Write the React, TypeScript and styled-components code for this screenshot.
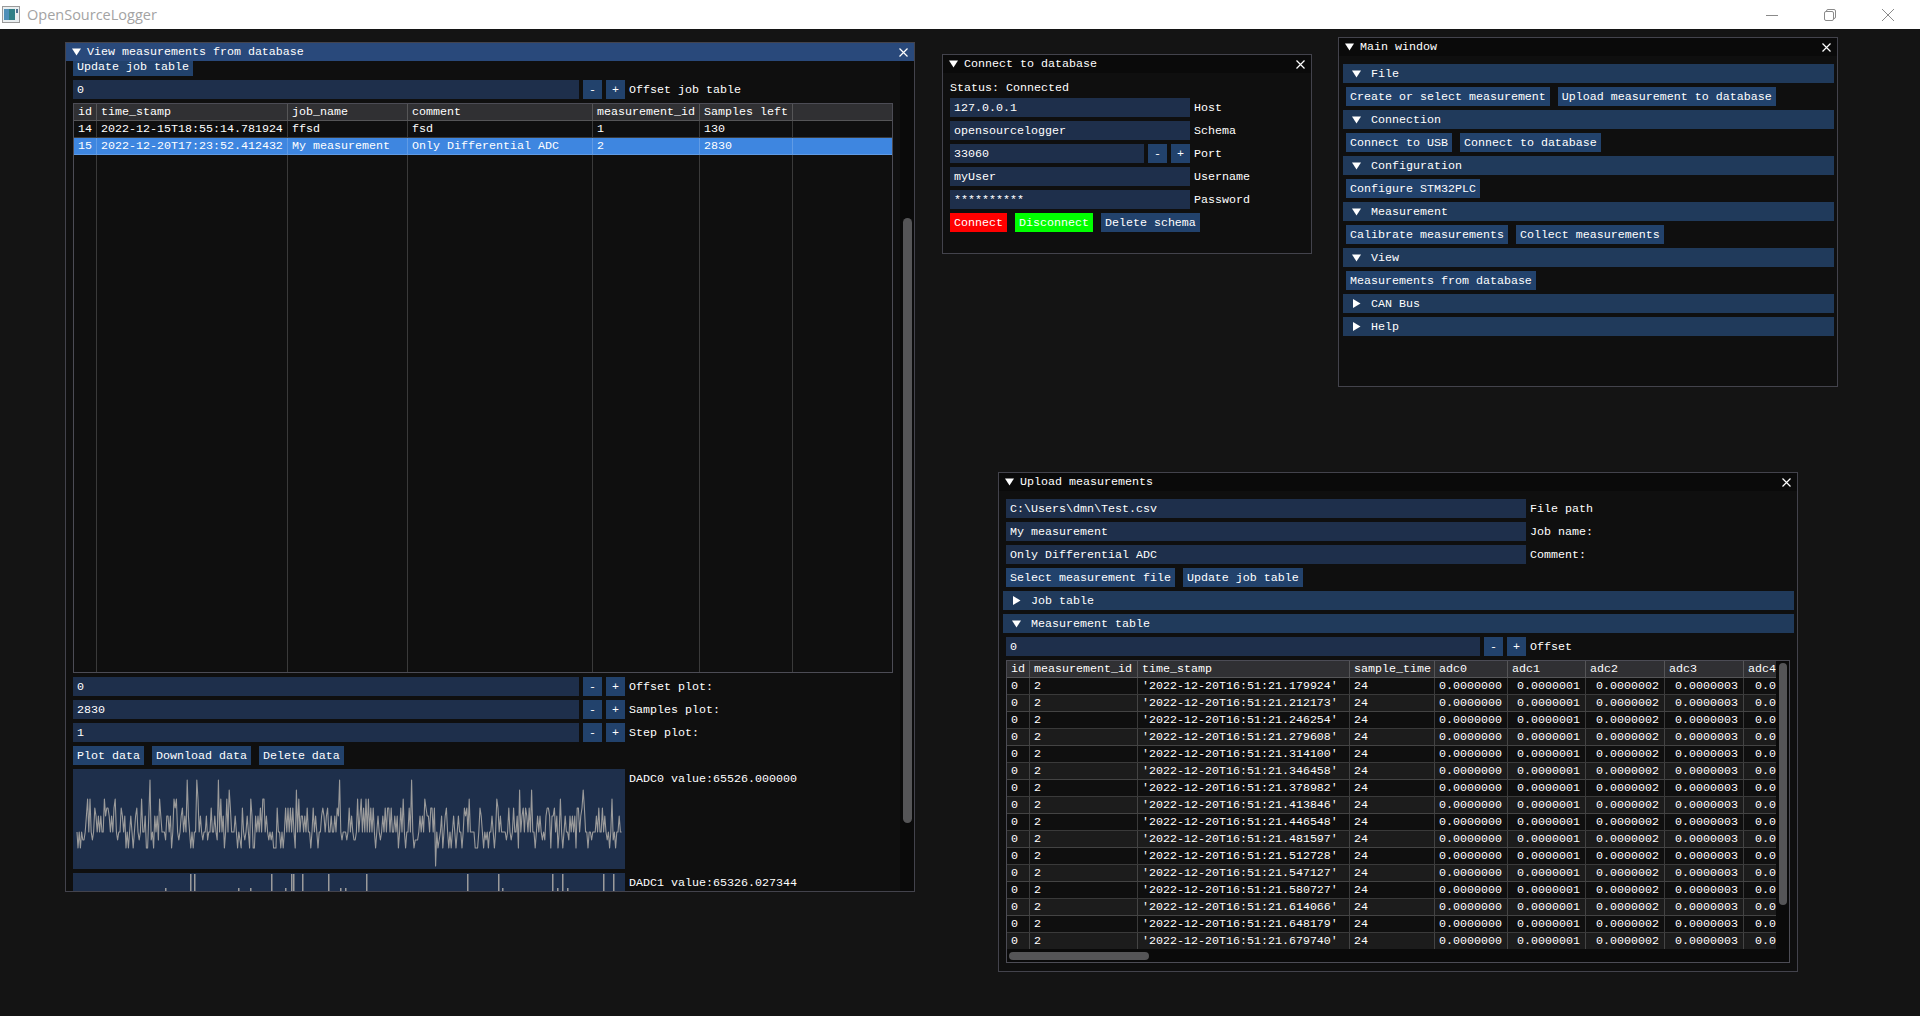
import React from "react";
import styled, { createGlobalStyle } from "styled-components";

const Global = createGlobalStyle`
  html, body { margin: 0; padding: 0; height: 100%; overflow: hidden; background: #141414; }
  #root { height: 100%; }
  * { box-sizing: border-box; }
`;

const Page = styled.div`
  width: 1920px;
  height: 1016px;
  display: flex;
  flex-direction: column;
  background: #141414;
  font-family: "Liberation Mono", "DejaVu Sans Mono", monospace;
  font-size: 11.67px;
  color: #fff;
`;

const OsBar = styled.header`
  height: 29px;
  flex: none;
  background: #fff;
  display: flex;
  align-items: center;
  padding: 0 3px 0 2px;
`;
const OsTitle = styled.span`
  margin-left: 7px;
  font-family: "Open Sans", "Noto Sans", sans-serif;
  font-size: 14.5px;
  color: #a3a3a3;
  flex: 1;
`;
const OsControl = styled.div`
  width: 58px;
  height: 29px;
  display: flex;
  align-items: center;
  justify-content: center;
  color: #8a8a8a;
`;

const Desktop = styled.main`
  position: relative;
  flex: 1;
`;

const Win = styled.section<{ $x: number; $y: number; $w: number; $h: number }>`
  position: absolute;
  left: ${(p) => p.$x}px;
  top: ${(p) => p.$y}px;
  width: ${(p) => p.$w}px;
  height: ${(p) => p.$h}px;
  background: #0f0f0f;
  border: 1px solid #43434c;
  display: flex;
  flex-direction: column;
  overflow: hidden;
`;
const WinTitle = styled.div<{ $active?: boolean }>`
  height: 18px;
  flex: none;
  display: flex;
  align-items: center;
  padding: 0 6px 0 6px;
  gap: 6px;
  background: ${(p) => (p.$active ? "#29497b" : "#0a0a0a")};
`;
const WinName = styled.span`
  flex: 1;
  white-space: pre;
`;
const Body = styled.div`
  flex: 1;
  min-height: 0;
  display: flex;
  flex-direction: column;
  align-items: flex-start;
  gap: 4px;
  padding: 8px 7px;
`;

const ScrollFrame = styled.div`
  flex: 1;
  min-height: 0;
  display: flex;
`;
const ScrolledContent = styled.div`
  flex: 1;
  min-width: 0;
  overflow: hidden;
  padding: 0 7px;
  display: flex;
  flex-direction: column;
  align-items: flex-start;
  gap: 4px;
  & > * { flex: none; }
  & > :first-child { margin-top: -4px; }
`;
const VTrack = styled.div<{ $w: number; $top: number }>`
  width: ${(p) => p.$w}px;
  flex: none;
  background: #0a0a0a;
  padding: ${(p) => p.$top}px 2px 0 3px;
`;
const VThumb = styled.div<{ $h: number }>`
  height: ${(p) => p.$h}px;
  background: #555557;
  border-radius: 5px;
`;
const HTrack = styled.div`
  height: 13px;
  flex: none;
  background: #0a0a0a;
  padding: 3px 0 2px 2px;
`;
const HThumb = styled.div<{ $w: number }>`
  width: ${(p) => p.$w}px;
  height: 8px;
  background: #555557;
  border-radius: 4px;
`;

const Row = styled.div`
  display: flex;
  align-items: center;
  gap: 4px;
  height: 19px;
  white-space: pre;
`;
const ButtonRow = styled(Row)`
  gap: 8px;
`;
const Text = styled.div`
  line-height: 15px;
  height: 13px;
  white-space: pre;
`;
const Field = styled.div<{ $w: number }>`
  width: ${(p) => p.$w}px;
  height: 19px;
  line-height: 20px;
  padding: 0 4px;
  background: #1e2f4b;
  white-space: pre;
`;
const Btn = styled.div<{ $kind?: "red" | "green" }>`
  height: 19px;
  line-height: 20px;
  padding: 0 4px;
  white-space: pre;
  background: ${(p) => (p.$kind === "red" ? "#ff0000" : p.$kind === "green" ? "#00ff00" : "#22426c")};
`;
const StepBtn = styled(Btn)`
  width: 19px;
  padding: 0;
  text-align: center;
`;
const Header = styled.div`
  height: 19px;
  flex: none;
  align-self: stretch;
  margin: 0 -4px 0 -3px;
  padding-left: 9px;
  background: #203a5b;
  display: flex;
  align-items: center;
  gap: 10px;
  white-space: pre;
`;
const Glyph = styled.svg`
  flex: none;
  display: block;
`;
const Chart = styled.svg`
  display: block;
`;

const TableBox = styled.div<{ $w: number; $h: number }>`
  width: ${(p) => p.$w}px;
  height: ${(p) => p.$h}px;
  border: 1px solid #4c4c55;
  display: flex;
  flex-direction: column;
  overflow: hidden;
`;
const TableRow = styled.div<{ $cols: string; $kind?: "head" | "sel" | "alt"; $fill?: boolean }>`
  display: grid;
  grid-template-columns: ${(p) => p.$cols};
  flex: ${(p) => (p.$fill ? "1" : "none")};
  height: ${(p) => (p.$fill ? "auto" : "17px")};
  width: max-content;
  min-width: 100%;
  border-bottom: ${(p) => (p.$fill ? "none" : "1px solid rgba(255,255,255,0.18)")};
  background: ${(p) =>
    p.$kind === "head" ? "#303033" : p.$kind === "sel" ? "#3e86e0" : p.$kind === "alt" ? "#1c1c1c" : "transparent"};
`;
const Cell = styled.div<{ $right?: boolean }>`
  border-right: 1px solid rgba(255, 255, 255, 0.18);
  padding: 0 5px 0 4px;
  line-height: 17px;
  white-space: pre;
  overflow: hidden;
  text-align: ${(p) => (p.$right ? "right" : "left")};
  &:last-child { border-right: none; }
`;
const TableMain = styled.div`
  flex: 1;
  min-height: 0;
  display: flex;
`;
const TableRows = styled.div`
  flex: 1;
  min-width: 0;
  overflow: hidden;
  display: flex;
  flex-direction: column;
`;

const PlotRow = styled.div`
  display: flex;
  gap: 4px;
  height: 100px;
`;
const PlotBox = styled.div`
  width: 552px;
  height: 100px;
  background: #1e2f4b;
`;
const PlotLabel = styled.div`
  padding-top: 4px;
  line-height: 13px;
  white-space: pre;
`;

const Down = () => (
  <Glyph width="9" height="8" viewBox="0 0 9 8">
    <path d="M0 0.5H9L4.5 7.5Z" fill="#fff" />
  </Glyph>
);
const Right = () => (
  <Glyph width="9" height="9" viewBox="0 0 9 9">
    <path d="M1 0V9L8.5 4.5Z" fill="#fff" />
  </Glyph>
);
const CloseX = () => (
  <Glyph width="9" height="9" viewBox="0 0 9 9">
    <path d="M0.5 0.5L8.5 8.5M8.5 0.5L0.5 8.5" stroke="#fff" strokeWidth="1.2" />
  </Glyph>
);

const Window: React.FC<{
  x: number; y: number; w: number; h: number; title: string; active?: boolean; children: React.ReactNode;
}> = ({ x, y, w, h, title, active, children }) => (
  <Win $x={x} $y={y - 29} $w={w} $h={h}>
    <WinTitle $active={active}>
      <Down />
      <WinName>{title}</WinName>
      <CloseX />
    </WinTitle>
    {children}
  </Win>
);

const Stepper: React.FC<{ w: number; value: string; label: string }> = ({ w, value, label }) => (
  <Row>
    <Field $w={w}>{value}</Field>
    <StepBtn>-</StepBtn>
    <StepBtn>+</StepBtn>
    <span>{label}</span>
  </Row>
);
const Labeled: React.FC<{ w: number; value: string; label: string }> = ({ w, value, label }) => (
  <Row>
    <Field $w={w}>{value}</Field>
    <span>{label}</span>
  </Row>
);
const Section: React.FC<{ open?: boolean; title: string }> = ({ open, title }) => (
  <Header>
    {open ? <Down /> : <Right />}
    <span>{title}</span>
  </Header>
);

/* ---- plot data ---- */
function makeWave(): string {
  let seed = 73129;
  const rnd = () => {
    seed = (seed * 1103515245 + 12345) & 0x7fffffff;
    return seed / 0x7fffffff;
  };
  const spikes = new Map<number, number>([
    [151, 11], [188, 11], [198, 11], [219, 11], [230, 21], [297, 21], [341, 11], [412, 11],
    [436, 97], [521, 21], [532, 21], [584, 21],
  ]);
  const pts: string[] = ["4,63"];
  const used = new Set<number>();
  let prev = 63;
  for (let px = 5; px <= 549; px += 1.2) {
    const r = rnd();
    const q = rnd();
    let y = 63;
    if (prev === 63 || q > 0.55) {
      if (r > 0.9) y = 30;
      else if (r > 0.66) y = 47;
      else if (r > 0.5) y = 39;
      else if (r > 0.34) y = 79;
      else if (r > 0.22) y = 71;
    }
    const abs = Math.round(px + 73);
    for (const [sx, sy] of spikes) {
      if (!used.has(sx) && Math.abs(sx - abs) <= 1) {
        y = sy;
        used.add(sx);
      }
    }
    pts.push(`${px.toFixed(1)},${y}`);
    prev = y;
  }
  return pts.join(" ");
}
const wave = makeWave();

const bars: [number, number][] = [
  [165, 3], [190, 17], [194, 17], [238, 3], [250, 3], [271, 17], [285, 3], [291, 17], [293, 17],
  [302, 17], [328, 17], [340, 3], [345, 3], [366, 17], [467, 17], [498, 17], [502, 3],
  [552, 17], [557, 3], [562, 17], [567, 3], [603, 17], [613, 17],
];

const Wave = () => (
  <Chart width="552" height="100" viewBox="0 0 552 100">
    <polyline points={wave} fill="none" stroke="#9b9b9b" strokeWidth="1.1" strokeLinejoin="round" />
  </Chart>
);
const Bars = () => (
  <Chart width="552" height="100" viewBox="0 0 552 100">
    {bars.map(([x, h], i) => (
      <rect key={i} x={x - 73} y={18 - h} width="1.5" height={h + 2} fill="#9b9b9b" />
    ))}
  </Chart>
);

/* ---- tables ---- */
const jobCols = "23px 191px 120px 185px 107px 93px 1fr";
const jobHead = ["id", "time_stamp", "job_name", "comment", "measurement_id", "Samples left", ""];
const jobRows = [
  ["14", "2022-12-15T18:55:14.781924", "ffsd", "fsd", "1", "130", ""],
  ["15", "2022-12-20T17:23:52.412432", "My measurement", "Only Differential ADC", "2", "2830", ""],
];
const mCols = "23px 108px 212px 85px 73px 78px 79px 79px 79px";
const mHead = ["id", "measurement_id", "time_stamp", "sample_time", "adc0", "adc1", "adc2", "adc3", "adc4"];
const micros = [
  "179924", "212173", "246254", "279608", "314100", "346458", "378982", "413846",
  "446548", "481597", "512728", "547127", "580727", "614066", "648179", "679740",
];

export default function App() {
  return (
    <Page>
      <Global />
      <OsBar>
        <svg width="18" height="17" viewBox="0 0 18 17">
          <rect x="0.5" y="0.5" width="17" height="16" fill="#e9eef0" stroke="#9a9a9a" />
          <rect x="2" y="3" width="11" height="11" fill="#2f7f86" />
          <rect x="2" y="3" width="5" height="11" fill="#4f8fb8" />
          <rect x="14" y="3" width="2" height="4" fill="#4a6f8f" />
        </svg>
        <OsTitle>OpenSourceLogger</OsTitle>
        <OsControl>
          <svg width="12" height="12" viewBox="0 0 12 12"><path d="M0 6.5H12" stroke="currentColor" /></svg>
        </OsControl>
        <OsControl>
          <svg width="12" height="12" viewBox="0 0 12 12" fill="none" stroke="currentColor">
            <rect x="0.5" y="2.5" width="9" height="9" rx="1.5" />
            <path d="M2.5 2.5V2A1.5 1.5 0 0 1 4 0.5H10A1.5 1.5 0 0 1 11.5 2V8A1.5 1.5 0 0 1 10 9.5H9.5" />
          </svg>
        </OsControl>
        <OsControl>
          <svg width="12" height="12" viewBox="0 0 12 12"><path d="M0 0L12 12M12 0L0 12" stroke="currentColor" /></svg>
        </OsControl>
      </OsBar>
      <Desktop>
        <Window x={65} y={42} w={850} h={850} title="View measurements from database" active>
          <ScrollFrame>
            <ScrolledContent>
              <Btn>Update job table</Btn>
              <Stepper w={506} value="0" label="Offset job table" />
              <TableBox $w={820} $h={570}>
                <TableRow $cols={jobCols} $kind="head">
                  {jobHead.map((c, i) => <Cell key={i}>{c}</Cell>)}
                </TableRow>
                {jobRows.map((r, i) => (
                  <TableRow key={i} $cols={jobCols} $kind={i === 1 ? "sel" : undefined}>
                    {r.map((c, j) => <Cell key={j}>{c}</Cell>)}
                  </TableRow>
                ))}
                <TableRow $cols={jobCols} $fill>
                  {jobHead.map((_, i) => <Cell key={i} />)}
                </TableRow>
              </TableBox>
              <Stepper w={506} value="0" label="Offset plot:" />
              <Stepper w={506} value="2830" label="Samples plot:" />
              <Stepper w={506} value="1" label="Step plot:" />
              <ButtonRow>
                <Btn>Plot data</Btn>
                <Btn>Download data</Btn>
                <Btn>Delete data</Btn>
              </ButtonRow>
              <PlotRow>
                <PlotBox><Wave /></PlotBox>
                <PlotLabel>DADC0 value:65526.000000</PlotLabel>
              </PlotRow>
              <PlotRow>
                <PlotBox><Bars /></PlotBox>
                <PlotLabel>DADC1 value:65326.027344</PlotLabel>
              </PlotRow>
            </ScrolledContent>
            <VTrack $w={14} $top={157}><VThumb $h={605} /></VTrack>
          </ScrollFrame>
        </Window>

        <Window x={942} y={54} w={370} h={200} title="Connect to database">
          <Body>
            <Text>Status: Connected</Text>
            <Labeled w={240} value="127.0.0.1" label="Host" />
            <Labeled w={240} value="opensourcelogger" label="Schema" />
            <Stepper w={194} value="33060" label="Port" />
            <Labeled w={240} value="myUser" label="Username" />
            <Labeled w={240} value="**********" label="Password" />
            <ButtonRow>
              <Btn $kind="red">Connect</Btn>
              <Btn $kind="green">Disconnect</Btn>
              <Btn>Delete schema</Btn>
            </ButtonRow>
          </Body>
        </Window>

        <Window x={1338} y={37} w={500} h={350} title="Main window">
          <Body>
            <Section open title="File" />
            <ButtonRow>
              <Btn>Create or select measurement</Btn>
              <Btn>Upload measurement to database</Btn>
            </ButtonRow>
            <Section open title="Connection" />
            <ButtonRow>
              <Btn>Connect to USB</Btn>
              <Btn>Connect to database</Btn>
            </ButtonRow>
            <Section open title="Configuration" />
            <ButtonRow>
              <Btn>Configure STM32PLC</Btn>
            </ButtonRow>
            <Section open title="Measurement" />
            <ButtonRow>
              <Btn>Calibrate measurements</Btn>
              <Btn>Collect measurements</Btn>
            </ButtonRow>
            <Section open title="View" />
            <ButtonRow>
              <Btn>Measurements from database</Btn>
            </ButtonRow>
            <Section title="CAN Bus" />
            <Section title="Help" />
          </Body>
        </Window>

        <Window x={998} y={472} w={800} h={500} title="Upload measurements">
          <Body>
            <Labeled w={520} value="C:\Users\dmn\Test.csv" label="File path" />
            <Labeled w={520} value="My measurement" label="Job name:" />
            <Labeled w={520} value="Only Differential ADC" label="Comment:" />
            <ButtonRow>
              <Btn>Select measurement file</Btn>
              <Btn>Update job table</Btn>
            </ButtonRow>
            <Section title="Job table" />
            <Section open title="Measurement table" />
            <Stepper w={474} value="0" label="Offset" />
            <TableBox $w={784} $h={303}>
              <TableMain>
                <TableRows>
                  <TableRow $cols={mCols} $kind="head">
                    {mHead.map((c) => <Cell key={c}>{c}</Cell>)}
                  </TableRow>
                  {micros.map((m, i) => (
                    <TableRow key={m} $cols={mCols} $kind={i % 2 ? "alt" : undefined}>
                      <Cell>0</Cell>
                      <Cell>2</Cell>
                      <Cell>{`'2022-12-20T16:51:21.${m}'`}</Cell>
                      <Cell>24</Cell>
                      {[0, 1, 2, 3, 4].map((n) => (
                        <Cell key={n} $right>{`0.000000${n}`}</Cell>
                      ))}
                    </TableRow>
                  ))}
                </TableRows>
                <VTrack $w={13} $top={2}><VThumb $h={242} /></VTrack>
              </TableMain>
              <HTrack><HThumb $w={140} /></HTrack>
            </TableBox>
          </Body>
        </Window>
      </Desktop>
    </Page>
  );
}
